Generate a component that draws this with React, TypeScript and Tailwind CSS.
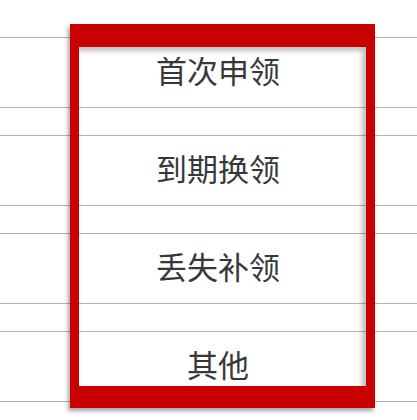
import React from 'react';

const items = ['首次申领', '到期换领', '丢失补领', '其他'];

export default function App() {
  return (
    <div className="relative h-[420px] w-[417px] overflow-hidden bg-white font-['Noto_Sans_CJK_SC','Noto_Sans',sans-serif]">
      {/* background list */}
      <div className="pt-[37px]">
        {items.map((label) => (
          <div key={label}>
            <div className="flex h-[70px] items-center justify-center border-t border-[#b4b4b4] pb-[6px] pl-[19px] text-[31px] leading-none text-[#383838]">
              {label}
            </div>
            <div className="h-[28px] border-t border-[#b4b4b4]" />
          </div>
        ))}
      </div>

      {/* highlight frame */}
      <div className="absolute left-[70px] top-[24px] h-[384px] w-[305px] border-x-[9px] border-t-[23px] border-b-[22px] border-[#c80000] shadow-[-2px_3px_4px_rgba(0,0,0,0.35),inset_-4px_4px_5px_rgba(0,0,0,0.25)]" />
    </div>
  );
}
